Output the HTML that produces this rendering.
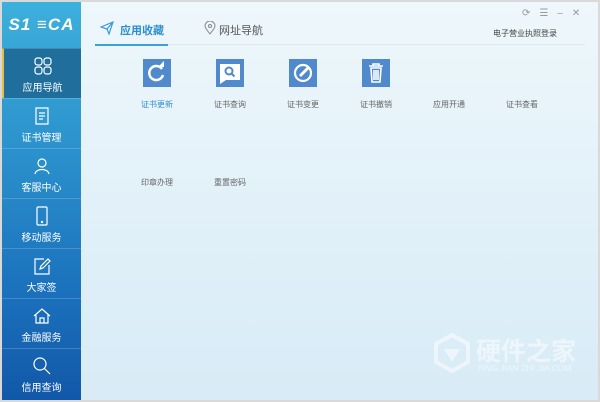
<!DOCTYPE html>
<html><head><meta charset="utf-8"><style>
*{margin:0;padding:0;box-sizing:border-box}
body{width:600px;height:402px;background:#d9d9d9;font-family:"Liberation Sans","Noto Sans CJK SC",sans-serif;position:relative;overflow:hidden}
#win{position:absolute;left:2px;top:2px;width:596px;height:398px;background:linear-gradient(180deg,#eef7fb 0%,#e2f1f9 50%,#d8ebf6 100%)}
#side{position:absolute;left:2px;top:2px;width:79px;height:398px;background:linear-gradient(180deg,#3db0dc 0%,#2a8fcb 40%,#1a6fbb 75%,#1258a8 100%)}
.logo{height:46px;color:#fff;font-style:italic;font-weight:bold;font-size:17px;display:flex;align-items:center;justify-content:center;letter-spacing:1px}
.it{height:50px;border-top:1px solid rgba(255,255,255,.18);color:#fff;font-size:10px;text-align:center;position:relative}
.it svg{display:block;margin:7px auto 3px;width:20px;height:20px}
.it.sel{background:#1f6e9c;border-left:2px solid #e8c040}
.tab{position:absolute;top:20px;font-size:11px}
.ic{position:absolute;top:59px;width:28px;height:28px;background:#5089cc}
.lb{position:absolute;font-size:8px;color:#666;width:60px;text-align:center}
.wm{opacity:.75}
</style></head><body>
<div id="win">
<div style="position:absolute;left:93px;top:42px;width:490px;height:1px;background:#dce9f0"></div>
<div style="position:absolute;left:93px;top:42px;width:73px;height:2px;background:#3aa0d6"></div>
<svg style="position:absolute;left:98px;top:19px" width="14" height="14" viewBox="0 0 14 14"><path d="M1 6 L13 1 L9 13 L7 8 Z M7 8 L13 1" fill="none" stroke="#3a9bd6" stroke-width="1.2"/></svg>
<div class="tab" style="left:118px;top:20px;color:#2e8fd0;font-weight:bold">应用收藏</div>
<svg style="position:absolute;left:202px;top:19px" width="12" height="14" viewBox="0 0 12 14"><path d="M6 13 C2 8 1 6 1 5 A5 5 0 0 1 11 5 C11 6 10 8 6 13Z" fill="none" stroke="#888"/><circle cx="6" cy="5" r="1.5" fill="none" stroke="#888"/></svg>
<div class="tab" style="left:217px;color:#555">网址导航</div>
<div style="position:absolute;left:491px;top:26px;font-size:8px;color:#444">电子营业执照登录</div>
<div style="position:absolute;left:520px;top:6px;font-size:10px;color:#999;letter-spacing:9px">⟳☰–✕</div>
</div>
<div id="side">
<div class="logo">S1 ≡CA</div>
<div class="it sel"><svg viewBox="0 0 20 20" fill="none" stroke="#fff" stroke-width="1.2"><rect x="2" y="2" width="7" height="7" rx="2.5"/><rect x="11" y="2" width="7" height="7" rx="2.5"/><rect x="2" y="11" width="7" height="7" rx="2.5"/><rect x="11" y="11" width="7" height="7" rx="2.5"/></svg>应用导航</div>
<div class="it"><svg viewBox="0 0 20 20" fill="none" stroke="#fff" stroke-width="1.2"><path d="M4 2h12v16H4z M7 7h6 M7 10h6 M7 13h4"/></svg>证书管理</div>
<div class="it"><svg viewBox="0 0 20 20" fill="none" stroke="#fff" stroke-width="1.2"><circle cx="10" cy="7" r="4"/><path d="M3 18 C4 12 16 12 17 18"/></svg>客服中心</div>
<div class="it"><svg viewBox="0 0 20 20" fill="none" stroke="#fff" stroke-width="1.2"><rect x="5" y="1" width="10" height="18" rx="1"/><circle cx="10" cy="16" r=".6" fill="#fff"/></svg>移动服务</div>
<div class="it"><svg viewBox="0 0 20 20" fill="none" stroke="#fff" stroke-width="1.2"><path d="M12 3H3v15h14V9 M8 13l1-3 7-7 2 2-7 7z"/></svg>大家签</div>
<div class="it"><svg viewBox="0 0 20 20" fill="none" stroke="#fff" stroke-width="1.2"><path d="M2 10 L10 3 L18 10 M4 9v8h12V9 M8 17v-5h4v5"/></svg>金融服务</div>
<div class="it"><svg viewBox="0 0 20 20" fill="none" stroke="#fff" stroke-width="1.2"><circle cx="8" cy="8" r="6"/><path d="M12.5 12.5L18 18"/></svg>信用查询</div>
</div>
<div class="ic" style="left:143px"><svg width="28" height="28" viewBox="0 0 28 28"><path d="M19 10 A7 7 0 1 0 20 16" fill="none" stroke="#fff" stroke-width="2.5"/><path d="M15 8h6V2z" fill="#fff"/></svg></div>
<div class="ic" style="left:216px"><svg width="28" height="28" viewBox="0 0 28 28"><path d="M4 5h20v16H10l-6 4z" fill="#fff"/><circle cx="13" cy="12" r="3.5" fill="none" stroke="#5089cc" stroke-width="2"/><path d="M15.5 14.5l3 3" stroke="#5089cc" stroke-width="2"/></svg></div>
<div class="ic" style="left:289px"><svg width="28" height="28" viewBox="0 0 28 28"><circle cx="14" cy="14" r="8" fill="none" stroke="#fff" stroke-width="2.2"/><path d="M11 17l8-8" stroke="#fff" stroke-width="3"/></svg></div>
<div class="ic" style="left:362px"><svg width="28" height="28" viewBox="0 0 28 28"><path d="M7 7h14M11 7V5h6v2M9 9h10l-1 14h-8z M12 11v10M14 11v10M16 11v10" fill="none" stroke="#fff" stroke-width="1.6"/></svg></div>
<div class="lb" style="left:127px;top:99px;color:#2e8fd0">证书更新</div>
<div class="lb" style="left:200px;top:99px">证书查询</div>
<div class="lb" style="left:273px;top:99px">证书变更</div>
<div class="lb" style="left:346px;top:99px">证书撤销</div>
<div class="lb" style="left:419px;top:99px">应用开通</div>
<div class="lb" style="left:492px;top:99px">证书查看</div>
<div class="lb" style="left:127px;top:177px">印章办理</div>
<div class="lb" style="left:200px;top:177px">重置密码</div>
<div class="wm">
<svg style="position:absolute;left:432px;top:333px" width="40" height="40" viewBox="0 0 40 40"><path d="M20 2 L36 11 V29 L20 38 L4 29 V11Z" fill="none" stroke="#f4f9fc" stroke-width="4"/><path d="M12 16h16l-8 13z" fill="#f4f9fc"/></svg>
<div style="position:absolute;left:476px;top:332px;font-size:25px;color:#f4f9fc;font-weight:bold">硬件之家</div>
<div style="position:absolute;left:477px;top:363px;font-size:8.5px;color:#f4f9fc">YING JIAN ZHI JIA.COM</div>
</div>
</body></html>
